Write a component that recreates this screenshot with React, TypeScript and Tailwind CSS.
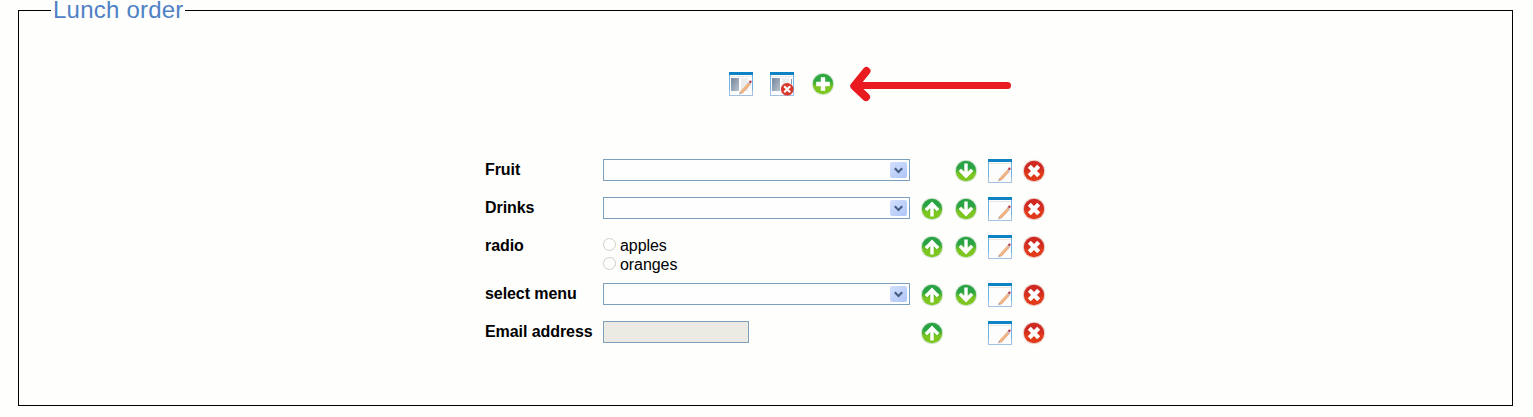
import React from "react";

function Disc({ id, from, to, rim, children }: { id: string; from: string; to: string; rim: string; children: React.ReactNode }) {
  return (
    <svg width="24" height="24" viewBox="0 0 24 24" className="block shrink-0">
      <defs>
        <linearGradient id={id} x1="0" y1="0" x2="0" y2="1">
          <stop offset="0" stopColor={from} />
          <stop offset="0.35" stopColor={from} />
          <stop offset="0.65" stopColor={to} />
          <stop offset="1" stopColor={to} />
        </linearGradient>
      </defs>
      <circle cx="12" cy="12" r="11.2" fill={rim} />
      <circle cx="12" cy="12" r="10.2" fill={`url(#${id})`} />
      {children}
    </svg>
  );
}

function UpIcon({ id }: { id: string }) {
  return (
    <Disc id={id} from="#2aa345" to="#7cc61f" rim="#d8e8d6">
      <path d="M12 19.4V8M5.9 13.1L12 7l6.1 6.1" fill="none" stroke="#fff" strokeWidth="3.4" />
    </Disc>
  );
}

function DownIcon({ id }: { id: string }) {
  return (
    <Disc id={id} from="#2aa345" to="#7cc61f" rim="#d8e8d6">
      <path d="M12 4.4V16M5.9 10.9L12 17l6.1-6.1" fill="none" stroke="#fff" strokeWidth="3.4" />
    </Disc>
  );
}

function AddIcon() {
  return (
    <Disc id="add" from="#2fa83f" to="#7cc61f" rim="#d8e8d6">
      <path d="M12 5.2v13.6M5.2 12h13.6" fill="none" stroke="#fff" strokeWidth="4.4" />
    </Disc>
  );
}

function DeleteIcon({ id }: { id: string }) {
  return (
    <Disc id={id} from="#cf2a22" to="#e13a1a" rim="#eed6d2">
      <path d="M7.3 7.3l9.4 9.4M16.7 7.3l-9.4 9.4" fill="none" stroke="#fff" strokeWidth="4.2" />
    </Disc>
  );
}

function WindowIcon({ content, pencil, remove }: { content?: boolean; pencil?: boolean; remove?: boolean }) {
  return (
    <svg width="24" height="24" viewBox="0 0 24 24" className="block shrink-0">
      <rect x="0.5" y="0.5" width="23" height="23" fill="#fdfdfd" stroke="#a3c1e2" />
      <path d="M0.5 3v15M23.5 3v15" stroke="#73b2e0" />
      <rect width="24" height="3" fill="#0d83c6" />
      <path d="M1 4.5h22" stroke="#e9e5e2" />
      {content && (
        <>
          <defs>
            <linearGradient id="thumb" x1="0" y1="0" x2="1" y2="1">
              <stop offset="0" stopColor="#73869c" />
              <stop offset="1" stopColor="#b9c2cc" />
            </linearGradient>
          </defs>
          <rect x="2" y="6" width="8" height="13" fill="url(#thumb)" />
          <rect x="12" y="6" width="7" height="13" fill="#ebedef" />
        </>
      )}
      {pencil && (
        <>
          <path d="M12.1 20.7L20.6 11.5" stroke="#dba27b" strokeWidth="3" />
          <path d="M12 20.5L20.4 11.3" stroke="#f5b783" strokeWidth="2" />
          <path d="M10 22.4l1-2.9 2 1.8z" fill="#b8a49a" />
          <path d="M20.2 11.6l0.9-1" stroke="#b6bfd1" strokeWidth="3" />
          <circle cx="21.4" cy="9.8" r="1.2" fill="#b83144" />
        </>
      )}
      {remove && (
        <>
          <path d="M21.5 7v5" stroke="#8796a6" />
          <circle cx="17.2" cy="17.2" r="6.3" fill="#d9372b" />
          <path d="M14.2 14.2l6 6M20.2 14.2l-6 6" stroke="#fff" strokeWidth="2.2" />
        </>
      )}
    </svg>
  );
}

function Select() {
  return (
    <div className="flex h-[22px] w-[307px] items-center justify-end border border-[#7c9fbf] bg-[#fefefe] pr-0.5">
      <div className="flex h-4 w-[17px] items-center justify-center rounded-xs bg-linear-to-br from-[#d3e0fe] to-[#aec5f7]">
        <svg width="9" height="7" viewBox="0 0 9 7">
          <path d="M0.8 1.2L4.5 4.9l3.7-3.7" fill="none" stroke="#465c80" strokeWidth="2.1" />
        </svg>
      </div>
    </div>
  );
}

function Option({ text }: { text: string }) {
  return (
    <label className="flex h-[19px] items-center gap-1">
      <span className="size-[13px] rounded-full border border-[#cfcfc4] bg-[#fefefc]" />
      <span className="translate-y-px">{text}</span>
    </label>
  );
}

type RowProps = { label: string; id: string; up?: boolean; down?: boolean; tall?: boolean; children: React.ReactNode };

function Row({ label, id, up = true, down = true, tall = false, children }: RowProps) {
  return (
    <div className={tall ? "flex h-12 items-start" : "flex h-[38px] items-start"}>
      <div className="w-[118px] shrink-0 pt-px font-bold">{label}</div>
      <div className="w-[317px] shrink-0">{children}</div>
      <div className="flex gap-2.5">
        <div className="size-6">{up && <UpIcon id={id + "-up"} />}</div>
        <div className="size-6">{down && <DownIcon id={id + "-down"} />}</div>
        <WindowIcon pencil />
        <DeleteIcon id={id + "-delete"} />
      </div>
    </div>
  );
}

export default function App() {
  return (
    <div className="h-[417px] overflow-hidden bg-[#fefefd] pr-5 pl-[18px] text-black [font-family:'Liberation_Sans',Arial,sans-serif]">
      <fieldset className="h-[406px] border border-black pl-8">
        <legend className="h-[21px] pr-px pl-0.5 text-[24px] leading-5 tracking-[0.22px] whitespace-nowrap text-[#4f81c5]">
          Lunch order
        </legend>
        <div className="flex h-[138px] items-start pt-[45px] pl-[678px]">
          <div className="flex gap-[17px] pt-1.5">
            <WindowIcon content pencil />
            <WindowIcon content remove />
            <AddIcon />
          </div>
          <svg width="163" height="36" viewBox="0 0 163 36" className="ml-3.5">
            <path d="M6 19.5h152.5" stroke="#e91b20" strokeWidth="7" strokeLinecap="round" />
            <path d="M17.5 5L5.3 20L17 31" fill="none" stroke="#e91b20" strokeWidth="8" strokeLinecap="round" strokeLinejoin="round" />
          </svg>
        </div>
        <div className="pl-[434px] text-[16px] leading-5 tracking-[-0.07px]">
          <Row label="Fruit" id="fruit" up={false}><Select /></Row>
          <Row label="Drinks" id="drinks"><Select /></Row>
          <Row label="radio" id="radio" tall>
            <Option text="apples" />
            <Option text="oranges" />
          </Row>
          <Row label="select menu" id="menu"><Select /></Row>
          <Row label="Email address" id="email" down={false}>
            <div className="h-[22px] w-[146px] border border-[#7c9fbf] bg-[#ebebe4]" />
          </Row>
        </div>
      </fieldset>
    </div>
  );
}
